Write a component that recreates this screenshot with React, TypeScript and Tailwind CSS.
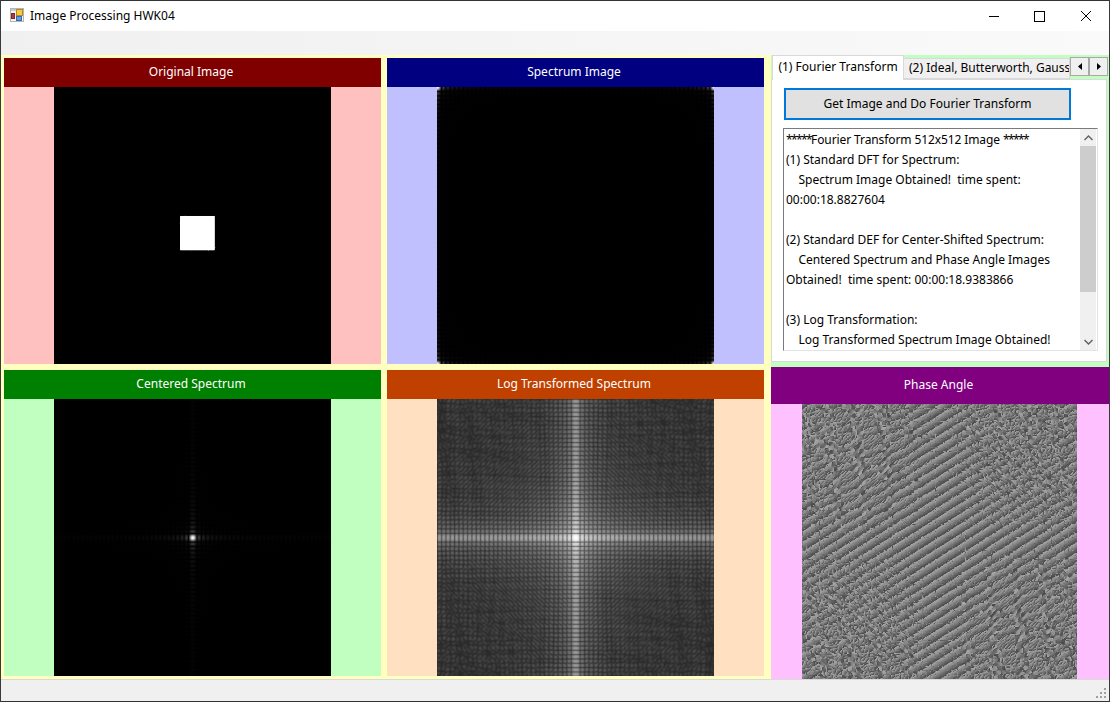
import React, { useLayoutEffect, useRef } from "react";

const N = 512;
const X0 = 233;
const Y0 = 238;
const L = 64;

type Kind = "original" | "spectrum" | "centered" | "log" | "phase";

// the test picture: white square, slightly soft corners and a few off pixels along its edge
const buildImage = () => {
  const img = new Float64Array(N * N);
  for (let y = Y0; y < Y0 + L; y++) for (let x = X0; x < X0 + L; x++) img[y * N + x] = 1;
  for (const [x, y] of [[X0, Y0], [X0 + L - 1, Y0], [X0, Y0 + L - 1], [X0 + L - 1, Y0 + L - 1]]) {
    img[y * N + x] = 0.5;
  }
  const edge = [
    [X0 + 9, Y0 - 1, 0.25],
    [X0 + 37, Y0 - 2, -0.2],
    [X0 + 52, Y0 + L, 0.3],
    [X0 + 21, Y0 + L + 1, 0.2],
    [X0 - 1, Y0 + 14, 0.25],
    [X0 - 2, Y0 + 44, -0.2],
    [X0 + L, Y0 + 27, 0.3],
    [X0 + L + 1, Y0 + 58, 0.2],
  ];
  for (const [x, y, d] of edge) img[y * N + x] += d;
  return img;
};

const fft = (re: Float64Array, im: Float64Array) => {
  const n = re.length;
  for (let i = 1, j = 0; i < n; i++) {
    let bit = n >> 1;
    for (; j & bit; bit >>= 1) j ^= bit;
    j ^= bit;
    if (i < j) {
      [re[i], re[j]] = [re[j], re[i]];
      [im[i], im[j]] = [im[j], im[i]];
    }
  }
  for (let len = 2; len <= n; len <<= 1) {
    const half = len >> 1;
    for (let i = 0; i < n; i += len) {
      for (let k = 0; k < half; k++) {
        const a = (-2 * Math.PI * k) / len;
        const c = Math.cos(a);
        const s = Math.sin(a);
        const p = i + k;
        const q = p + half;
        const tr = re[q] * c - im[q] * s;
        const ti = re[q] * s + im[q] * c;
        re[q] = re[p] - tr;
        im[q] = im[p] - ti;
        re[p] += tr;
        im[p] += ti;
      }
    }
  }
};

let cache: { re: Float64Array; im: Float64Array; img: Float64Array } | null = null;

const transform = () => {
  if (cache) return cache;
  const img = buildImage();
  const re = Float64Array.from(img);
  const im = new Float64Array(N * N);
  const rowRe = new Float64Array(N);
  const rowIm = new Float64Array(N);
  for (let y = 0; y < N; y++) {
    for (let x = 0; x < N; x++) {
      rowRe[x] = re[y * N + x];
      rowIm[x] = im[y * N + x];
    }
    fft(rowRe, rowIm);
    for (let x = 0; x < N; x++) {
      re[y * N + x] = rowRe[x];
      im[y * N + x] = rowIm[x];
    }
  }
  for (let x = 0; x < N; x++) {
    for (let y = 0; y < N; y++) {
      rowRe[y] = re[y * N + x];
      rowIm[y] = im[y * N + x];
    }
    fft(rowRe, rowIm);
    for (let y = 0; y < N; y++) {
      re[y * N + x] = rowRe[y];
      im[y * N + x] = rowIm[y];
    }
  }
  cache = { re, im, img };
  return cache;
};

// 1-2-1 blur in both directions, softens the log picture's grid
const soften = (src: Float64Array) => {
  const out = new Float64Array(N * N);
  for (let y = 0; y < N; y++) {
    for (let x = 0; x < N; x++) {
      let sum = 0;
      for (let dy = -1; dy <= 1; dy++) {
        for (let dx = -1; dx <= 1; dx++) {
          const yy = Math.min(N - 1, Math.max(0, y + dy));
          const xx = Math.min(N - 1, Math.max(0, x + dx));
          sum += src[yy * N + xx] * (2 - Math.abs(dx)) * (2 - Math.abs(dy));
        }
      }
      out[y * N + x] = sum / 16;
    }
  }
  return out;
};

const buildSource = (kind: Kind) => {
  const { re, im, img } = transform();
  if (kind === "original") return img.map((v) => Math.min(255, Math.max(0, v * 255)));
  const src = new Float64Array(N * N);
  const shift = kind === "spectrum" ? 0 : N / 2;
  const peak = L * L;
  for (let v = 0; v < N; v++) {
    for (let u = 0; u < N; u++) {
      const i = ((v + shift) % N) * N + (u + shift) % N;
      const mag = Math.hypot(re[i], im[i]);
      let value = 0;
      if (kind === "spectrum" || kind === "centered") value = (255 * mag) / peak;
      // small floor so the nulls don't go fully black
      if (kind === "log") value = (255 * Math.log(1 + 8 * Math.hypot(mag, 0.5))) / Math.log(1 + 8 * peak);
      // arctangent of the ratio, so the stripes repeat every half turn
      if (kind === "phase") value = (Math.atan(im[i] / re[i]) / Math.PI + 0.5) * 100 + 70;
      src[v * N + u] = value;
    }
  }
  return kind === "log" ? soften(src) : src;
};

const FourierCanvas = ({ kind, size }: { kind: Kind; size: number }) => {
  const ref = useRef<HTMLCanvasElement>(null);

  useLayoutEffect(() => {
    const ctx = ref.current?.getContext("2d");
    if (!ctx) return;
    const src = buildSource(kind);
    const out = ctx.createImageData(size, size);
    const step = N / size;
    // bilinear, same as the stretched picture box
    for (let y = 0; y < size; y++) {
      const sy = Math.min((y + 0.5) * step - 0.5, N - 1.001);
      const y0 = Math.max(0, Math.floor(sy));
      const fy = Math.max(0, sy - y0);
      for (let x = 0; x < size; x++) {
        const sx = Math.min((x + 0.5) * step - 0.5, N - 1.001);
        const x0 = Math.max(0, Math.floor(sx));
        const fx = Math.max(0, sx - x0);
        const top = src[y0 * N + x0] * (1 - fx) + src[y0 * N + x0 + 1] * fx;
        const bottom = src[(y0 + 1) * N + x0] * (1 - fx) + src[(y0 + 1) * N + x0 + 1] * fx;
        const g = top * (1 - fy) + bottom * fy;
        const i = (y * size + x) * 4;
        out.data[i] = g;
        out.data[i + 1] = g;
        out.data[i + 2] = g;
        out.data[i + 3] = 255;
      }
    }
    ctx.putImageData(out, 0, 0);
  }, [kind, size]);

  return <canvas ref={ref} width={size} height={size} className="block shrink-0" />;
};

interface ImagePanelProps {
  title: string;
  kind: Kind;
  headerClass: string;
  bodyClass: string;
}

const ImagePanel = ({ title, kind, headerClass, bodyClass }: ImagePanelProps) => (
  <div className="flex flex-col h-[306px]">
    <div className={`h-[29px] pr-[3px] pb-[2px] flex items-center justify-center text-white text-[12px] ${headerClass}`}>{title}</div>
    <div className={`flex-1 flex justify-center ${bodyClass}`}>
      <FourierCanvas kind={kind} size={277} />
    </div>
  </div>
);

const AppIcon = () => (
  <svg width="16" height="16" viewBox="0 0 16 16" className="shrink-0">
    <rect x="0.5" y="0.5" width="13" height="13" fill="#f4f4f4" stroke="#b4b4b4" />
    <rect x="1" y="1" width="12" height="2" fill="#c8c8c8" />
    <rect x="1.5" y="5.5" width="3" height="5" fill="#c8322a" stroke="#7a2a2a" />
    <rect x="6.5" y="1.5" width="6" height="6" fill="#f6c945" stroke="#b98a20" />
    <rect x="6.5" y="8.5" width="5" height="4" fill="#5f9fe8" stroke="#3a6aa8" />
  </svg>
);

const WindowButtons = () => (
  <div className="flex items-center ml-auto h-full">
    <svg width="46" height="31" viewBox="0 0 46 31">
      <path d="M18 15.5H28" stroke="#000" strokeWidth="1" />
    </svg>
    <svg width="46" height="31" viewBox="0 0 46 31">
      <rect x="17.5" y="10.5" width="10" height="10" fill="none" stroke="#000" />
    </svg>
    <svg width="46" height="31" viewBox="0 0 46 31">
      <path d="M18 10L28 20M28 10L18 20" stroke="#000" strokeWidth="1" />
    </svg>
  </div>
);

const ScrollArrow = ({ up }: { up: boolean }) => (
  <div className="h-[17px] flex items-center justify-center">
    <svg width="9" height="6" viewBox="0 0 9 6">
      <path d={up ? "M0.5 5L4.5 1L8.5 5" : "M0.5 1L4.5 5L8.5 1"} fill="none" stroke="#606060" strokeWidth="1.4" />
    </svg>
  </div>
);

const TabArrow = ({ right }: { right: boolean }) => (
  <div className="w-[19px] h-[19px] flex items-center justify-center bg-[#f0f0f0] border border-[#a8a8a8]">
    <svg width="4" height="7" viewBox="0 0 4 7">
      <path d={right ? "M0 0L4 3.5L0 7Z" : "M4 0L0 3.5L4 7Z"} fill="#000" />
    </svg>
  </div>
);

const LOG_LINES = [
  "(1) Standard DFT for Spectrum:",
  "    Spectrum Image Obtained!  time spent:",
  "00:00:18.8827604",
  "",
  "(2) Standard DEF for Center-Shifted Spectrum:",
  "    Centered Spectrum and Phase Angle Images",
  "Obtained!  time spent: 00:00:18.9383866",
  "",
  "(3) Log Transformation:",
  "    Log Transformed Spectrum Image Obtained!",
];

const TabPanel = () => (
  <div className="relative h-[312px] bg-[#c0ffc0]">
    <div className="flex items-start h-[24px] pl-[1px]">
      <div className="relative z-10 w-[132px] h-[25px] pb-[3px] bg-white border border-b-0 border-[#d9d9d9] flex items-center justify-center text-[12px]">
        (1) Fourier Transform
      </div>
      <div className="mt-[3px] w-[166px] h-[21px] bg-[#f0f0f0] border-y border-r border-[#d9d9d9] pl-[5px] overflow-hidden whitespace-nowrap text-[12px] leading-[18px]">
        (2) Ideal, Butterworth, Gaussian
      </div>
      <div className="mt-[2px] flex">
        <TabArrow right={false} />
        <TabArrow right />
      </div>
    </div>
    <div className="mr-[2px] h-[283px] bg-white border border-[#d9d9d9] pl-[12px] pt-[8px]">
      <div className="w-[287px] h-[32px] bg-[#e1e1e1] border-2 border-[#0078d7] flex items-center justify-center text-[12px]">
        Get Image and Do Fourier Transform
      </div>
      <div className="mt-[8px] w-[315px] h-[223px] flex border border-[#e3e3e3] border-t-[#7a7a7a] border-l-[#7a7a7a] -ml-[1px]">
        <div className="flex-1 pl-[2px] pt-[1px] overflow-hidden text-[12px] leading-[20px] whitespace-pre">
          <div className="h-[20px] tracking-[-0.1px]">
            <span className="tracking-[-1.6px]">*****</span>Fourier Transform 512x512 Image <span className="tracking-[-1.6px]">*****</span>
          </div>
          {LOG_LINES.map((line, i) => (
            <div key={i} className="h-[20px]">{line}</div>
          ))}
        </div>
        <div className="w-[16px] mr-[1px] bg-[#f0f0f0] flex flex-col">
          <ScrollArrow up />
          <div className="h-[146px] bg-[#cdcdcd]" />
          <div className="flex-1" />
          <ScrollArrow up={false} />
        </div>
      </div>
    </div>
  </div>
);

const App = () => {
  return (
    <div className="w-[1110px] h-[702px] overflow-hidden flex flex-col bg-[#f0f0f0] text-black border-x border-[#3a3a3a] font-['Noto_Sans','Liberation_Sans',sans-serif]">
      <div className="h-[31px] bg-white flex items-center pl-[9px] gap-[4px] text-[12px] border-t border-[#333]">
        <AppIcon />
        <span>Image Processing HWK04</span>
        <WindowButtons />
      </div>
      <div className="h-[24px] bg-gradient-to-r from-[#f0f0f0] to-[#fafafa]" />
      <div className="h-[624px] bg-[#ffffc0] flex">
        <div className="w-[770px] shrink-0 pl-[3px] pt-[3px] grid grid-cols-[377px_377px] gap-[6px] content-start">
          <ImagePanel title="Original Image" kind="original" headerClass="bg-[#800000]" bodyClass="bg-[#ffc0c0]" />
          <ImagePanel title="Spectrum Image" kind="spectrum" headerClass="bg-[#000080]" bodyClass="bg-[#c0c0ff]" />
          <ImagePanel title="Centered Spectrum" kind="centered" headerClass="bg-[#008000]" bodyClass="bg-[#c0ffc0]" />
          <ImagePanel title="Log Transformed Spectrum" kind="log" headerClass="bg-[#c04000]" bodyClass="bg-[#ffe0c0]" />
        </div>
        <div className="flex-1 flex flex-col">
          <TabPanel />
          <div className="h-[37px] pr-[3px] pb-[2px] bg-[#800080] text-white text-[12px] flex items-center justify-center">Phase Angle</div>
          <div className="flex-1 bg-[#ffc0ff] pl-[31px]">
            <FourierCanvas kind="phase" size={275} />
          </div>
        </div>
      </div>
      <div className="relative flex-1 border-t border-[#d9d9d9] border-b border-b-[#333]">
        <svg width="11" height="11" viewBox="0 0 11 11" className="absolute right-[2px] bottom-[2px]">
          <path d="M8 0h2v2H8zM4 4h2v2H4zM8 4h2v2H8zM0 8h2v2H0zM4 8h2v2H4zM8 8h2v2H8z" fill="#a0a0a0" />
        </svg>
      </div>
    </div>
  );
};

export default App;
